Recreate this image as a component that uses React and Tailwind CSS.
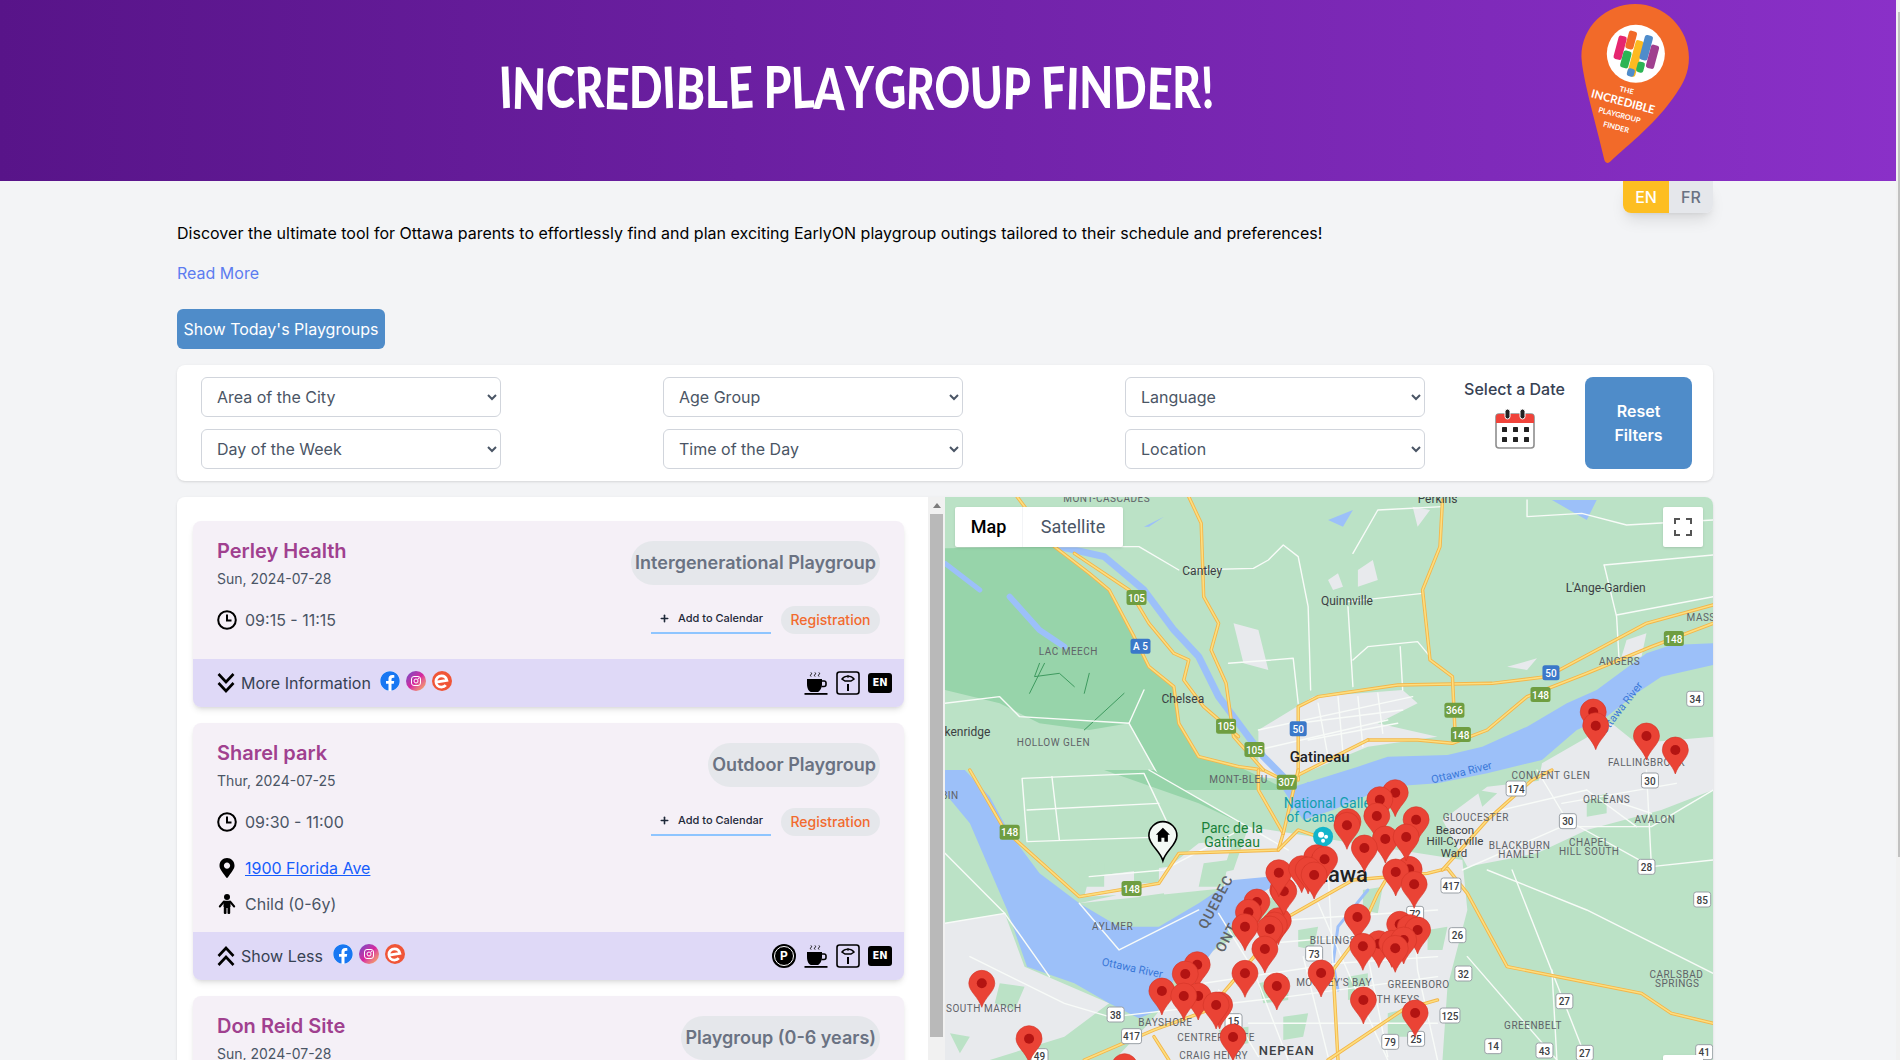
import React from 'react';
import { Plus } from 'lucide-react';
import { FaFacebook, FaMapMarkerAlt } from 'react-icons/fa';

const z6 = (x, y) => [940 + x / 2.01, 490 + y / 3];
const z7 = (x, y) => [940 + x / 2.01, 770 + y / 3];

const line = (d, stroke, width, key) => (
  <path key={key} d={d} fill="none" stroke={stroke} strokeWidth={width} strokeLinejoin="round" strokeLinecap="round" vectorEffect="non-scaling-stroke" />
);

const road = (pts, i) => {
  const d = 'M' + pts;
  return (
    <g key={i}>
      {line(d, '#f3b64a', 3.4)}
      {line(d, '#fdde7f', 1.6)}
    </g>
  );
};

const whites6 = [
  '500,240 630,235 660,210 690,165 720,200 740,350 745,600', '820,350 830,590', '830,190 880,60 1010,50', '970,310 820,335',
  '1180,30 1180,80 1290,70 1380,105 1554,90', '1335,225 1554,195', '1335,225 1360,380 1365,510', '1360,375 1554,320',
  '830,510 860,470 960,455 985,500', '925,470 930,600', '10,640 120,620 160,680 380,700', '380,700 410,600', '380,700 440,860',
  '230,170 400,170 480,240', '580,520 710,505 720,640', '640,720 950,620', '760,640 780,800', '840,620 850,770', '640,780 900,690',
  '800,620 810,790', '880,610 890,730', '720,700 930,660', '740,750 920,700',
];
const whites7 = [
  '165,25 410,10 470,200 175,215 165,25', '225,20 240,210', '175,120 440,100', '10,250 130,430', '10,460 130,430', '130,430 220,620',
  '60,560 250,700 340,740', '700,870 630,600 560,430', '900,870 830,640 760,400', '1000,870 960,600 950,400', '530,640 800,580 1000,560',
  '350,740 700,680 1000,620', '1050,300 1250,170 1430,170 1554,60', '1100,300 1300,420 1554,610', '1150,300 1300,870', '1060,560 1240,870',
  '1200,0 1260,150 1430,290 1554,270', '1230,600 1240,870', '1420,0 1430,290', '1350,90 1430,130', '280,400 360,540 520,420',
  '300,320 450,300 590,190', '420,0 700,240', '700,450 1000,420', '620,760 1000,760', '780,300 800,870',
  '1100,130 1300,60', '1300,60 1400,170', '1250,100 1480,40', '660,520 900,490', '560,660 640,860', '730,560 780,860', '860,560 900,860',
];
const roads6 = [
  '155,20 230,170 300,250 340,300 390,440 420,530 470,590 480,700 520,800 600,830 650,840 690,870',
  '720,870 720,650 760,620 920,585 1110,580 1220,560 1420,400 1554,345',
  '500,20 525,100 530,320 560,400 545,480 575,580 590,740 650,840',
  '1010,30 1005,170 970,300 985,510 1030,560 1035,720',
  '270,190 380,300 420,400 470,490 500,510 490,570 530,650 600,740',
  '860,750 960,750 1030,760 1100,720 1180,620 1300,550 1430,470 1554,400',
  '700,870 860,750',
];
const roads7 = [
  '60,0 130,180 280,380 440,340 480,250 680,240 690,190 640,60 640,0',
  '290,870 430,780 540,720 700,440 830,330 980,310 1020,295 1060,370 1140,590 1410,670 1470,730 1554,760',
  '430,800 460,870', '1010,300 1100,150 1190,30 1230,0', '800,870 790,600 840,500 880,370 900,320',
  '780,870 930,720 1000,690', '680,240 720,180 760,200', '720,0 690,190',
];

const labels = [
  [z6, 335, 36, 'MONT-CASCADES', 10, 'a'], [z6, 1000, 38, 'Perkins', 12, 'c'], [z6, 527, 254, 'Cantley', 12, 'c'], [z6, 818, 344, 'Quinnville', 12, 'c'],
  [z6, 1338, 307, "L'Ange-Gardien", 12, 'c'], [z6, 258, 495, 'LAC MEECH', 10, 'a'], [z6, 488, 640, 'Chelsea', 12, 'c'], [z6, 55, 739, 'kenridge', 12, 'c'],
  [z6, 228, 768, 'HOLLOW GLEN', 10, 'a'], [z6, 1366, 524, 'ANGERS', 10, 'a'], [z6, 1530, 393, 'MASS', 10, 'a'], [z6, 1420, 828, 'FALLINGBROOK', 10, 'a'],
  [z6, 763, 815, 'Gatineau', 15, 'b'],
  [z7, 1228, 26, 'CONVENT GLEN', 10, 'a'], [z7, 600, 40, 'MONT-BLEU', 10, 'a'], [z7, 1035, 191, 'Beacon', 11.5, 'c'], [z7, 1035, 226, 'Hill-Cyrville', 11.5, 'c'],
  [z7, 1033, 262, 'Ward', 11.5, 'c'], [z7, 1077, 153, 'GLOUCESTER', 10, 'a'], [z7, 1165, 236, 'BLACKBURN', 10, 'a'], [z7, 1165, 263, 'HAMLET', 10, 'a'],
  [z7, 1305, 227, 'CHAPEL', 10, 'a'], [z7, 1305, 254, 'HILL SOUTH', 10, 'a'], [z7, 1340, 98, 'ORLÉANS', 10, 'a'], [z7, 1437, 158, 'AVALON', 10, 'a'],
  [z7, 347, 480, 'AYLMER', 10, 'a'], [z7, 88, 725, 'SOUTH MARCH', 10, 'a'], [z7, 453, 768, 'BAYSHORE', 10, 'a'], [z7, 555, 813, 'CENTREPOINTE', 10, 'a'],
  [z7, 550, 868, 'CRAIG HENRY', 10, 'a'], [z7, 697, 855, 'NEPEAN', 13, 'n'], [z7, 792, 648, "MOONEY'S BAY", 10, 'a'], [z7, 962, 653, 'GREENBORO', 10, 'a'],
  [z7, 900, 698, 'SOUTH KEYS', 10, 'a'], [z7, 1192, 776, 'GREENBELT', 10, 'a'], [z7, 1480, 623, 'CARLSBAD', 10, 'a'], [z7, 1482, 650, 'SPRINGS', 10, 'a'],
  [z7, 790, 521, 'BILLINGS', 10, 'a'], [z7, 20, 88, 'BIN', 10, 'a'], [z7, 790, 335, 'Ottawa', 22, 'o'],
];
const labelStyle = {
  a: { fill: '#5f6368', letterSpacing: '.5px' },
  c: { fill: '#3c4043' },
  b: { fill: '#202124', fontWeight: 500 },
  n: { fill: '#3c4043', fontWeight: 500, letterSpacing: '1px' },
  o: { fill: '#202124', fontWeight: 500 },
};

const shields = [
  [z6, 395, 324, '105', 'g'], [z6, 575, 710, '105', 'g'], [z6, 632, 780, '105', 'g'], [z6, 403, 470, 'A 5', 'b'], [z6, 1228, 550, '50', 'b'], [z6, 720, 718, '50', 'b'],
  [z6, 1475, 447, '148', 'g'], [z6, 1207, 615, '148', 'g'], [z6, 1047, 735, '148', 'g'], [z6, 1034, 662, '366', 'g'], [z6, 1518, 628, '34', 'w'],
  [z7, 140, 188, '148', 'g'], [z7, 385, 357, '148', 'g'], [z7, 697, 38, '307', 'g'], [z7, 1158, 57, '174', 'w'], [z7, 1427, 33, '30', 'w'], [z7, 1262, 155, '30', 'w'],
  [z7, 1420, 292, '28', 'w'], [z7, 1532, 390, '85', 'w'], [z7, 1027, 348, '417', 'w'], [z7, 955, 433, '72', 'w'], [z7, 1040, 497, '26', 'w'], [z7, 752, 552, '73', 'w'],
  [z7, 1052, 612, '32', 'w'], [z7, 353, 735, '38', 'w'], [z7, 385, 800, '417', 'w'], [z7, 1255, 695, '27', 'w'], [z7, 1025, 738, '125', 'w'], [z7, 1112, 830, '14', 'w'],
  [z7, 1215, 843, '43', 'w'], [z7, 1296, 850, '27', 'w'], [z7, 1536, 848, '41', 'w'], [z7, 905, 817, '79', 'w'], [z7, 957, 808, '25', 'w'], [z7, 200, 860, '49', 'w'], [z7, 590, 755, '15', 'w'],
];

const markers = [
  z6(1313, 666), z6(1318, 707), z6(1420, 738), z6(1478, 780),
  ...[
    [84, 640], [179, 806], [371, 890], [517, 584], [493, 612], [446, 663], [519, 678], [490, 678], [562, 705], [555, 705], [589, 801],
    [613, 610], [677, 648], [766, 609], [851, 690], [955, 729], [637, 396], [620, 427], [680, 452], [672, 465], [663, 477], [613, 470], [653, 537],
    [689, 360], [691, 364], [681, 308], [757, 263], [773, 268], [727, 296], [740, 300], [752, 315], [839, 441], [924, 463], [945, 473], [960, 480],
    [882, 521], [908, 520], [932, 510], [915, 535], [850, 529], [943, 298], [916, 306], [953, 343], [915, 68], [884, 89], [878, 138], [820, 155],
    [818, 166], [957, 149], [895, 207], [937, 201], [853, 234],
  ].map(([x, y]) => z7(x, y)),
];

function MapDrawing() {
  const [hx, hy] = z7(448, 200);
  const [tx, ty] = z7(770, 200);
  return (
    <svg viewBox="945 497 768 700" className="block w-full h-full" style={{ fontFamily: 'Roboto, sans-serif' }}>
      <rect x="945" y="497" width="768" height="700" fill="#bbe2c6" />
      <g transform="translate(940 490) scale(.4975 .3333)">
        <path d="M10,175 L230,170 300,250 340,300 390,440 420,530 470,590 480,700 520,800 600,830 700,900 L460,900 440,860 380,700 300,720 200,700 120,640 10,600 Z" fill="#97d4aa" />
        <path d="M640,720 L750,620 930,600 960,640 880,700 1000,740 860,770 700,870 640,860 Z M1210,820 L1350,700 1400,760 1554,740 1554,900 1200,900 Z M780,270 L800,250 810,290 790,300 Z M590,400 L640,420 660,540 610,520 Z M840,240 L870,210 880,270 840,290 Z M950,50 L985,60 960,110 Z M1140,530 L1200,505 1180,540 Z M1380,450 L1420,430 1410,500 1370,500 Z" fill="#e8eaed" />
        <path d="M690,900 L840,830 900,800 1020,795 1090,770 1180,710 1260,640 1320,600 1420,490 1470,465 1554,460 1554,525 1450,560 1400,610 1340,680 1280,720 1210,810 1100,850 1000,880 900,890 790,960 730,990 Z M780,90 L830,60 810,110 Z M1230,30 L1320,30 1300,90 Z M410,110 L450,80 420,110 Z" fill="#9cc0f9" />
        {line('M240,170 L330,200 410,300 470,420 520,500 560,620 610,720 650,800 690,860', '#9cc0f9', 7)}
        {line('M10,220 L80,300', '#9cc0f9', 5)}
        {line('M140,320 L200,420 250,470', '#9cc0f9', 6)}
        {line('M200,520 L190,560 240,550 270,590 M300,550 L290,610 M370,610 L290,720 M180,610 L210,520', '#3e9a5f', 1)}
        {whites6.map((p, i) => line('M' + p, '#f8fbf8', 1.4, i))}
        {roads6.map(road)}
      </g>
      <g transform="translate(940 770) scale(.4975 .3333)">
        <path d="M330,0 L520,100 620,170 560,120 480,50 430,0 Z" fill="#97d4aa" />
        <path d="M280,400 L590,300 620,170 1050,270 1060,420 1020,650 1010,870 350,870 420,760 530,560 700,400 600,350 Z M1010,150 L1100,50 1400,0 1554,0 1554,60 1450,120 1300,180 1200,250 1060,290 Z M10,460 L130,430 170,590 340,700 250,800 100,870 10,870 Z M300,320 L460,290 520,220 590,210 570,300 430,370 290,380 Z" fill="#e8eaed" />
        <path d="M10,0 L50,0 100,80 140,190 200,310 280,400 360,470 440,470 520,400 590,330 660,320 680,340 610,400 580,480 540,560 480,600 440,720 400,745 340,700 270,640 175,590 135,420 60,160 10,70 Z" fill="#9cc0f9" />
        <path d="M280,290 L330,280 330,350 280,350 Z M390,280 L440,270 440,340 390,340 Z M530,280 L580,270 570,350 520,350 Z M400,380 L450,370 460,450 400,450 Z M850,360 L890,350 880,430 850,420 Z M1080,60 L1120,70 1090,110 Z M20,790 L60,800 40,850 Z M720,480 L760,470 750,540 720,530 Z M640,640 L700,620 700,690 650,700 Z M820,620 L860,610 860,680 820,690 Z M900,730 L950,710 950,800 900,800 Z M560,780 L620,770 620,820 570,830 Z M690,740 L740,730 730,800 690,810 Z M1300,90 L1340,70 1340,130 1300,140 Z M120,640 L170,650 150,720 110,700 Z M980,480 L1020,470 1010,540 980,540 Z" fill="#bbe2c6" />
        {line('M700,130 L740,40 M860,360 L800,470 790,580 800,660', '#9cc0f9', 3)}
        {whites7.map((p, i) => line('M' + p, '#f8fbf8', 1.4, i))}
        {roads7.map(road)}
      </g>
      <text transform={`translate(${z6(1050, 858).join(' ')}) rotate(-14)`} textAnchor="middle" fontSize="11" fill="#3a78d8">Ottawa River</text>
      <text transform={`translate(${z6(1375, 660).join(' ')}) rotate(-52)`} textAnchor="middle" fontSize="11" fill="#3a78d8">Ottawa River</text>
      <text transform={`translate(${z7(385, 605).join(' ')}) rotate(12)`} textAnchor="middle" fontSize="11" fill="#3a78d8">Ottawa River</text>
      <text transform={`translate(${z7(535, 480).join(' ')}) rotate(-62)`} fontSize="14" fontWeight="500" letterSpacing="1" fill="#5f6368">QUEBEC</text>
      <text transform={`translate(${z7(570, 550).join(' ')}) rotate(-62)`} fontSize="14" fontWeight="500" letterSpacing="1" fill="#5f6368">ONT</text>
      <text x={z7(587, 190)[0]} y={z7(587, 190)[1]} textAnchor="middle" fontSize="14" fill="#188038">Parc de la</text>
      <text x={z7(587, 232)[0]} y={z7(587, 232)[1]} textAnchor="middle" fontSize="14" fill="#188038">Gatineau</text>
      <text x={z7(790, 115)[0]} y={z7(790, 115)[1]} textAnchor="middle" fontSize="14" fill="#129eaf">National Gallery</text>
      <text x={z7(760, 156)[0]} y={z7(760, 156)[1]} textAnchor="middle" fontSize="14" fill="#129eaf">of Canada</text>
      {labels.map(([z, x, y, t, size, kind]) => {
        const [px, py] = z(x, y);
        return <text key={t + x} x={px} y={py} textAnchor="middle" fontSize={size} style={labelStyle[kind]}>{t}</text>;
      })}
      {shields.map(([z, x, y, t, kind], i) => {
        const [px, py] = z(x, y);
        const w = t.length > 2 ? 20 : 17;
        return (
          <g key={i}>
            <rect x={px - w / 2} y={py - 8} width={w} height={15} rx="2.5" fill={kind === 'g' ? '#6f9e41' : kind === 'b' ? '#3a78c9' : '#fff'} stroke={kind === 'w' ? '#9aa0a6' : 'none'} strokeWidth="1" />
            <text x={px} y={py + 3.5} textAnchor="middle" fontSize="10" fontWeight="500" fill={kind === 'w' ? '#3c4043' : '#fff'}>{t}</text>
          </g>
        );
      })}
      <circle cx={tx} cy={ty} r="10" fill="#12b5cb" />
      <circle cx={tx - 2} cy={ty - 2} r="3" fill="#fff" />
      <circle cx={tx + 3} cy={ty} r="2" fill="#fff" />
      <circle cx={tx} cy={ty + 4} r="2" fill="#fff" />
      <g transform={`translate(${hx} ${hy})`}>
        <path d="M0 24 C-3 14 -14 8 -14 -1 A14 14 0 1 1 14 -1 C14 8 3 14 0 24Z" fill="#f4faf5" stroke="#000" strokeWidth="1.6" />
        <path d="M0 -9 L7 -2 L5 -2 L5 5 L1.5 5 L1.5 1 L-1.5 1 L-1.5 5 L-5 5 L-5 -2 L-7 -2 Z" fill="#000" />
      </g>
      {markers.map(([x, y], i) => (
        <g key={i} transform={`translate(${x} ${y})`}>
          <path d="M0 24 C-3 14 -13 8 -13 0 A13 13 0 1 1 13 0 C13 8 3 14 0 24Z" fill="#ea4335" stroke="#d33426" strokeWidth=".6" />
          <circle r="5" fill="#b31412" />
        </g>
      ))}
    </svg>
  );
}

function Logo() {
  const bar = (x, y, h, w, fill) => (
    <rect x={x - w / 2} y={y - h / 2} width={w} height={h} rx="7" fill={fill} transform={`rotate(15 ${x} ${y})`} />
  );
  const words = [
    ['THE', 530, 278, 22, 12], ['INCREDIBLE', 518, 316, 34, 15], ['PLAYGROUP', 508, 352, 22, 15], ['FINDER', 498, 388, 22, 15],
  ];
  return (
    <svg viewBox="380 0 350 500" className="w-[117px] h-[167px] block">
      <path d="M465,480 C440,370 400,240 396,170 C396,80 470,12 557,12 C645,12 718,85 718,172 C718,220 700,250 680,280 C620,370 540,430 482,484 Q470,494 465,480 Z" fill="#f26a29" />
      <circle cx="559" cy="161" r="87" fill="#fff" />
      {bar(512, 143, 72, 25, '#e6266f')}
      {bar(545, 120, 55, 25, '#f26a29')}
      {bar(529, 178, 52, 25, '#2cb454')}
      {bar(558, 175, 110, 25, '#fdba21')}
      {bar(590, 143, 76, 25, '#4f8ccb')}
      {bar(609, 170, 72, 25, '#a0408f')}
      {bar(573, 201, 32, 22, '#2cb454')}
      {bar(544, 217, 24, 22, '#4f8ccb')}
      {words.map(([t, x, y, s, r]) => (
        <text key={t} x={x} y={y} textAnchor="middle" fontSize={s} fontWeight="700" fill="#fff" fontFamily="Lato, sans-serif" transform={`rotate(${r} ${x} ${y})`}>{t}</text>
      ))}
    </svg>
  );
}

function CalendarIcon() {
  return (
    <svg viewBox="0 0 40 40" className="w-10 h-10">
      <rect x="1" y="5" width="38" height="34" rx="3" fill="#fff" stroke="#8e8e8e" strokeWidth="1.6" />
      <path d="M1 14 V8 a3 3 0 0 1 3 -3 H36 a3 3 0 0 1 3 3 V14 Z" fill="#f0433a" />
      <rect x="10" y="0" width="5" height="10" rx="2.5" fill="#222" stroke="#fff" strokeWidth="1" />
      <rect x="25" y="0" width="5" height="10" rx="2.5" fill="#222" stroke="#fff" strokeWidth="1" />
      {[18, 28].map((y) => [7, 18, 29].map((x) => <rect key={x + '-' + y} x={x} y={y} width="5" height="5" rx=".6" fill="#222" />))}
    </svg>
  );
}

function ClockIcon() {
  return (
    <svg viewBox="0 0 20 20" className="w-5 h-5 shrink-0" fill="none" stroke="#000" strokeWidth="2">
      <circle cx="10" cy="10" r="8.8" />
      <path d="M10 4.5 V10.5 H14.5" />
    </svg>
  );
}

function ChildIcon() {
  return (
    <svg viewBox="0 0 20 20" className="w-5 h-5 shrink-0" fill="#000">
      <circle cx="10" cy="3" r="3" />
      <rect x="6.5" y="6.8" width="7" height="7.2" rx="1.4" />
      <path d="M7 7.5 L2.8 12.5 M13 7.5 L17.2 12.5" stroke="#000" strokeWidth="2" strokeLinecap="round" />
      <rect x="6.8" y="13" width="2.7" height="7" rx="1" />
      <rect x="10.5" y="13" width="2.7" height="7" rx="1" />
    </svg>
  );
}

function DoubleChevron({ up }) {
  return (
    <svg viewBox="0 0 18 22" className={up ? 'w-[18px] h-[22px] mr-[6px] rotate-180' : 'w-[18px] h-[22px] mr-[6px]'} fill="none" stroke="#000" strokeWidth="2.6">
      <path d="M1.5 2 L9 10 L16.5 2 M1.5 11 L9 19 L16.5 11" />
    </svg>
  );
}

function Socials() {
  return (
    <div className="flex items-center gap-[6px] -mt-[4px]">
      <span className="bg-white rounded-full w-5 h-5 flex items-center justify-center"><FaFacebook className="w-5 h-5 text-[#1877f2]" /></span>
      <span className="w-5 h-5 rounded-full bg-linear-to-br from-[#6d3fc8] via-[#d6249f] to-[#fdb53a] flex items-center justify-center">
        <svg viewBox="0 0 12 12" className="w-3 h-3" fill="none" stroke="#fff" strokeWidth="1">
          <rect x="1.5" y="1.5" width="9" height="9" rx="2.5" />
          <circle cx="6" cy="6" r="2" />
          <circle cx="8.5" cy="3.5" r=".4" fill="#fff" />
        </svg>
      </span>
      <span className="w-5 h-5 rounded-full bg-[#f05537] flex items-center justify-center">
        <svg viewBox="0 0 14 14" className="w-[15px] h-[15px]" fill="none" stroke="#fff" strokeWidth="2.6">
          <path d="M2 7.5 L12 6 C11.4 3.2 9.2 1.8 7 1.8 C4 1.8 1.8 4 1.8 7 C1.8 10 4 12.2 7 12.2 C8.6 12.2 10 11.6 11 10.4" />
        </svg>
      </span>
    </div>
  );
}

function Parking() {
  return (
    <span className="w-6 h-6 rounded-full bg-black flex items-center justify-center">
      <span className="w-5 h-5 rounded-full bg-black border border-white text-white text-[12px] font-bold leading-none flex items-center justify-center">P</span>
    </span>
  );
}

function Coffee() {
  return (
    <svg viewBox="0 0 24 24" className="w-6 h-6">
      <path d="M6 5 q-1.2 -1 0 -2 t0 -2 M10 5 q-1.2 -1 0 -2 t0 -2 M14 5 q-1.2 -1 0 -2 t0 -2" fill="none" stroke="#000" strokeWidth="1" transform="translate(1 0.5)" />
      <path d="M3 8 H18 V13 C18 18 15 20.5 14 21 H7 C5 20.5 3 18 3 13 Z" fill="#000" />
      <path d="M18 10 H20 A1.8 1.8 0 0 1 22 12 V13.5 A2 2 0 0 1 20 15.5 H17.5" fill="none" stroke="#000" strokeWidth="1.6" />
      <rect x="0.5" y="22" width="23" height="1.8" fill="#000" />
    </svg>
  );
}

function ScaleIcon() {
  return (
    <svg viewBox="0 0 24 24" className="w-6 h-6">
      <rect x="1" y="1" width="22" height="22" rx="2.5" fill="none" stroke="#000" strokeWidth="1.6" />
      <path d="M6 8 A7 6 0 0 1 18 8 L15 10 H9 Z" fill="none" stroke="#000" strokeWidth="1.4" />
      <path d="M12 4 V7" stroke="#000" strokeWidth="1" />
      <rect x="11" y="13" width="2" height="7" fill="#000" />
    </svg>
  );
}

function EnBadge() {
  return <span className="w-6 h-5 rounded-[3px] bg-black text-white text-[10px] font-bold leading-none flex items-center justify-center" style={{ fontFamily: '"DejaVu Sans", sans-serif' }}>EN</span>;
}

function PlaygroupCard({ title, date, type, time, open, toggle, labelGap }) {
  return (
    <div className="bg-[#f5f0f7] rounded-lg shadow-md overflow-hidden">
      <div className={open ? 'pl-6 pr-6 pt-4 h-[209px] flex flex-col' : 'pl-6 pr-6 pt-4 h-[138px] flex flex-col'}>
        <div className="flex justify-between items-start">
          <div>
            <h3 className="text-xl leading-7 font-semibold text-[#a0408f]">{title}</h3>
            <p className="text-sm leading-5 mt-1 text-gray-600">{date}</p>
          </div>
          <span className="h-11 mt-1 px-[4px] rounded-full bg-gray-200 text-gray-500 text-lg font-semibold flex items-center">{type}</span>
        </div>
        <div className="flex justify-between items-center mt-[17px]">
          <div className="flex items-center gap-2 text-gray-600"><ClockIcon />{time}</div>
          <div className="flex items-center gap-[10px]">
            <button className="h-7 w-[120px] border-b-2 border-blue-300 text-[11px] font-medium text-gray-800 flex items-center justify-center gap-[8px] pb-[2px]"><Plus className="w-[11px] h-[11px]" strokeWidth={3.5} />Add to Calendar</button>
            <span className="h-7 w-[99px] rounded-full bg-gray-200 text-[#f26a2e] text-sm font-medium flex items-center justify-center">Registration</span>
          </div>
        </div>
        {open && (
          <div className="mt-5 flex flex-col gap-3 text-gray-600">
            <div className="flex items-center gap-2 h-6"><FaMapMarkerAlt className="w-5 h-5 text-black" /><a href="#" className="text-blue-600 underline">1900 Florida Ave</a></div>
            <div className="flex items-center gap-2 h-6"><ChildIcon />Child (0-6y)</div>
          </div>
        )}
      </div>
      <div className="h-12 bg-[#dfd9f7] pl-6 pr-3 flex items-center justify-between">
        <div className="flex items-center text-gray-700">
          <DoubleChevron up={open} />
          <span className={labelGap}>{toggle}</span>
          <Socials />
        </div>
        <div className="flex items-center gap-2">
          {open && <Parking />}
          <Coffee />
          <ScaleIcon />
          <EnBadge />
        </div>
      </div>
    </div>
  );
}

const selects = ['Area of the City', 'Age Group', 'Language', 'Day of the Week', 'Time of the Day', 'Location'];

const titleLetters = 'INCREDIBLE PLAYGROUP FINDER!'.split('');

export default function App() {
  return (
    <div className="h-screen overflow-y-auto bg-[#f3f4f6] text-base" style={{ fontFamily: 'Inter, sans-serif' }}>
      <div className="fixed right-0 top-0 w-1 h-screen bg-[#f1f1f1] flex justify-end pt-3 z-10">
        <div className="w-[2px] h-[845px] bg-[#c1c1c1]" />
      </div>

      <header className="h-[181px] w-[1896px] bg-linear-to-r from-[#581489] to-[#8a30c8] flex">
        <div className="w-[1712px] pb-[10px] flex items-center justify-center">
          <h1 className="text-[44px] font-black text-white leading-none whitespace-pre scale-y-[1.3]" style={{ fontFamily: 'Lato, sans-serif' }}>
            {titleLetters.map((c, i) => (
              <span key={i} className={i % 3 === 0 ? 'inline-block -rotate-3' : i % 3 === 1 ? 'inline-block rotate-2 translate-y-[1px]' : 'inline-block'}>{c}</span>
            ))}
          </h1>
        </div>
        <div className="-ml-[136px] h-[167px]"><Logo /></div>
      </header>

      <main className="ml-[177px] w-[1536px] pb-10">
        <div className="flex justify-end">
          <div className="flex h-8 shadow-lg rounded-b-lg">
            <button className="w-[46px] bg-[#fdbe22] text-white font-medium rounded-bl-lg">EN</button>
            <button className="w-[44px] bg-gray-200 text-gray-500 font-medium rounded-br-lg">FR</button>
          </div>
        </div>
        <p className="mt-2 text-black tracking-[0.015px]">Discover the ultimate tool for Ottawa parents to effortlessly find and plan exciting EarlyON playgroup outings tailored to their schedule and preferences!</p>
        <a href="#" className="block mt-4 text-[#5c7cf0]">Read More</a>
        <button className="block mt-6 h-10 w-[208px] rounded-md bg-[#4f8cc9] text-white">Show Today's Playgroups</button>

        <section className="mt-4 h-[116px] bg-white rounded-lg shadow-sm pl-6 pr-[21px] flex items-center">
          <div className="grid grid-cols-[300px_300px_300px] justify-between gap-y-3 w-[1224px]">
            {selects.map((s) => (
              <select key={s} className="h-10 pl-[11px] bg-white border border-gray-300 rounded-md text-gray-600">
                <option>{s}</option>
              </select>
            ))}
          </div>
          <div className="ml-[39px] w-[101px] self-start pt-[12px] flex flex-col items-center text-gray-700 font-medium">
            <span className="leading-6 whitespace-nowrap">Select a Date</span>
            <span className="mt-[8px]"><CalendarIcon /></span>
          </div>
          <button className="ml-5 w-[107px] h-[92px] rounded-lg bg-[#4f8cc9] text-white font-semibold px-5 leading-6 mt-[-1px]">Reset Filters</button>
        </section>

        <section className="mt-4 h-[700px] flex rounded-t-lg overflow-hidden shadow-sm">
          <div className="w-[751px] shrink-0 h-full pt-6 pb-[4px] pl-4 pr-6 flex flex-col gap-4 bg-white overflow-y-auto">
            <div className="shrink-0"><PlaygroupCard title="Perley Health" date="Sun, 2024-07-28" type="Intergenerational Playgroup" time="09:15 - 11:15" toggle="More Information" labelGap="mr-[9px]" /></div>
            <div className="shrink-0"><PlaygroupCard title="Sharel park" date="Thur, 2024-07-25" type="Outdoor Playgroup" time="09:30 - 11:00" toggle="Show Less" labelGap="mr-[10px]" open /></div>
            <div className="shrink-0"><PlaygroupCard title="Don Reid Site" date="Sun, 2024-07-28" type="Playgroup (0-6 years)" time="09:30 - 11:30" toggle="More Information" labelGap="mr-[9px]" /></div>
            <div className="shrink-0"><PlaygroupCard title="Sharel park" date="Sun, 2024-07-28" type="Outdoor Playgroup" time="09:30 - 11:00" toggle="More Information" labelGap="mr-[9px]" /></div>
          </div>
          <div className="w-[17px] shrink-0 bg-[#f1f1f1] flex flex-col items-center">
            <div className="h-[17px] flex items-center justify-center">
              <span className="w-0 h-0 border-x-[4.5px] border-x-transparent border-b-[5px] border-b-[#7d7d7d]" />
            </div>
            <div className="w-[13px] h-[523px] bg-[#b9b9b9]" />
          </div>
          <div className="relative flex-1 overflow-hidden" style={{ fontFamily: 'Roboto, sans-serif' }}>
            <MapDrawing />
            <div className="absolute left-[10px] top-[10px] h-10 flex bg-white rounded-[2px] shadow text-lg">
              <span className="w-[68px] flex items-center justify-center font-medium text-black border-r border-gray-100">Map</span>
              <span className="w-[100px] flex items-center justify-center text-gray-600">Satellite</span>
            </div>
            <div className="absolute right-[10px] top-[10px] w-10 h-10 bg-white rounded-[2px] shadow flex items-center justify-center">
              <svg viewBox="0 0 18 18" className="w-[18px] h-[18px]" fill="none" stroke="#555" strokeWidth="2"><path d="M1 6 V1 H6 M12 1 H17 V6 M17 12 V17 H12 M6 17 H1 V12" /></svg>
            </div>
            <div className="absolute right-[10px] top-[558px] w-10 h-20 bg-white rounded-[2px] shadow" />
          </div>
        </section>
      </main>
    </div>
  );
}
